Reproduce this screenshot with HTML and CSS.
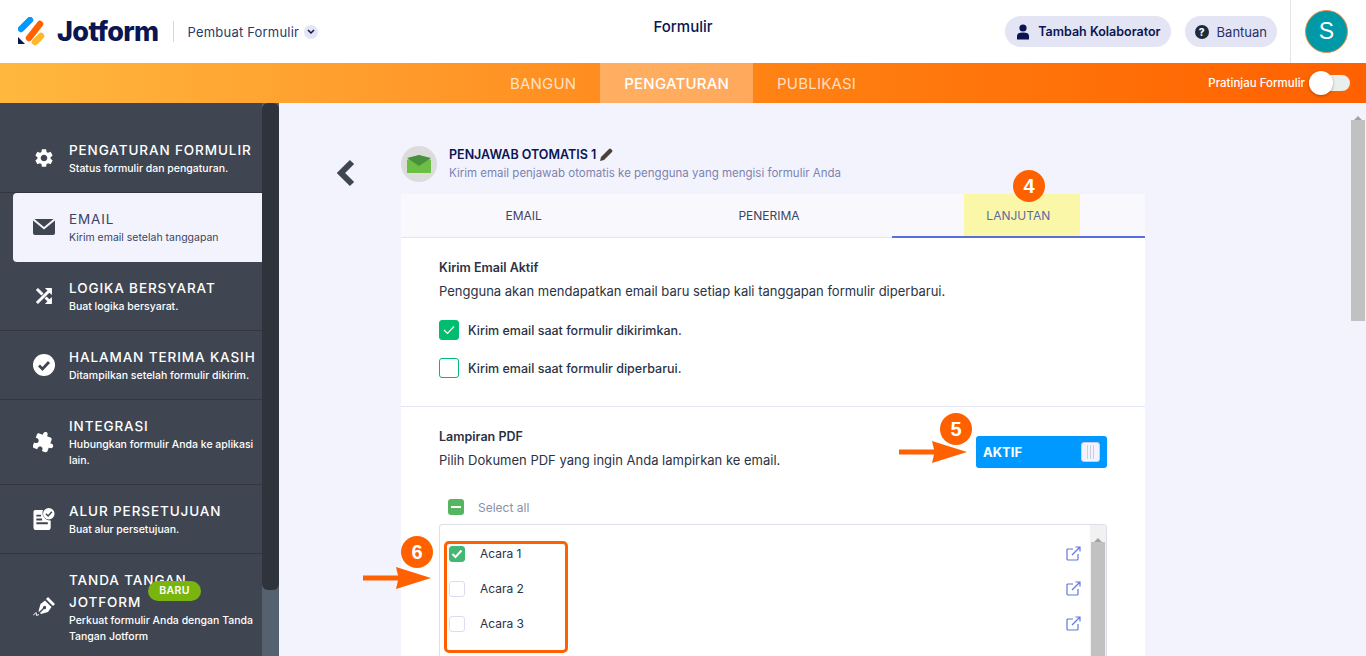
FILE: index.html
```html
<!DOCTYPE html>
<html lang="id">
  <head>
    <meta charset="UTF-8" />
    <title>Jotform - Pembuat Formulir</title>
    <link rel="stylesheet" href="styles.css">
  </head>
  <body>
    <header class="topbar">
      <div class="topbar__left">
        <svg class="logo" width="28" height="30" viewBox="0 0 28 30">
          <path d="M3 12 L12 3" stroke="#0099ff" stroke-width="6.4" stroke-linecap="round" />
          <path d="M11 21 L22 7" stroke="#ff6100" stroke-width="6.4" stroke-linecap="round" />
          <path d="M17 25 L23 19" stroke="#ffb629" stroke-width="6.4" stroke-linecap="round" />
          <path d="M0 20 L7 27 L0 27 Z" fill="#0a1551" />
        </svg>
        <span class="logo__text">Jotform</span>
        <span class="topbar__sep"></span>
        <span class="topbar__builder">Pembuat Formulir</span>
        <span class="topbar__caret">
          <svg width="8" height="6" viewBox="0 0 8 6"><path d="M1 1 L4 4 L7 1" fill="none" stroke="#0a1551" stroke-width="1.5" /></svg>
        </span>
      </div>
      <div class="topbar__title">Formulir</div>
      <div class="topbar__right">
        <button class="pill pill--bold">
          <svg width="14" height="16" viewBox="0 0 14 16"><circle cx="7" cy="4" r="3.6" fill="#0a1551" /><path d="M1 15.5 V12 C1 9.5 3 8.5 7 8.5 S13 9.5 13 12 V15.5 Z" fill="#0a1551" /></svg>
          Tambah Kolaborator
        </button>
        <button class="pill">
          <span class="pill__help">?</span>
          Bantuan
        </button>
        <div class="topbar__account">
          <div class="avatar">S</div>
        </div>
      </div>
    </header>

    <nav class="navbar">
      <div class="navbar__tabs">
        <a class="navbar__tab">BANGUN</a>
        <a class="navbar__tab navbar__tab--active">PENGATURAN</a>
        <a class="navbar__tab">PUBLIKASI</a>
      </div>
      <div class="preview">
        <span>Pratinjau Formulir</span>
        <span class="preview__switch"><span class="preview__knob"></span></span>
      </div>
    </nav>

    <div class="layout">
      <aside class="sidebar">
        <ul class="menu">
          <li class="menu__item">
            <svg class="menu__icon" viewBox="0 0 24 24"><path d="M19.14 12.94c.04-.3.06-.61.06-.94 0-.32-.02-.64-.07-.94l2.03-1.58c.18-.14.23-.41.12-.61l-1.92-3.32c-.12-.22-.37-.29-.59-.22l-2.39.96c-.5-.38-1.03-.7-1.62-.94l-.36-2.54c-.04-.24-.24-.41-.48-.41h-3.84c-.24 0-.43.17-.47.41l-.36 2.54c-.59.24-1.13.57-1.62.94l-2.39-.96c-.22-.08-.47 0-.59.22L2.74 8.87c-.12.21-.08.47.12.61l2.03 1.58c-.05.3-.09.63-.09.94s.02.64.07.94l-2.03 1.58c-.18.14-.23.41-.12.61l1.92 3.32c.12.22.37.29.59.22l2.39-.96c.5.38 1.03.7 1.62.94l.36 2.54c.05.24.24.41.48.41h3.84c.24 0 .44-.17.47-.41l.36-2.54c.59-.24 1.13-.56 1.62-.94l2.39.96c.22.08.47 0 .59-.22l1.92-3.32c.12-.22.07-.47-.12-.61l-2.01-1.58zM12 15.6c-1.98 0-3.6-1.62-3.6-3.6s1.62-3.6 3.6-3.6 3.6 1.62 3.6 3.6-1.62 3.6-3.6 3.6z" /></svg>
            <div class="menu__text">
              <div class="menu__title">PENGATURAN FORMULIR</div>
              <div class="menu__sub">Status formulir dan pengaturan.</div>
            </div>
          </li>
          <li class="menu__item menu__item--active">
            <svg class="menu__icon" viewBox="0 0 22 16"><path d="M1.5 0 H20.5 L11 8 Z M0 1.5 L11 10.5 L22 1.5 V14 Q22 16 20 16 H2 Q0 16 0 14 Z" /></svg>
            <div class="menu__text">
              <div class="menu__title">EMAIL</div>
              <div class="menu__sub">Kirim email setelah tanggapan</div>
            </div>
          </li>
          <li class="menu__item">
            <svg class="menu__icon" viewBox="0 0 24 24"><path stroke="#fff" stroke-width="1.2" d="M10.59 9.17L5.41 4 4 5.41l5.17 5.17 1.42-1.41zM14.5 4l2.04 2.04L4 18.59 5.41 20 17.96 7.46 20 9.5V4h-5.5zm.33 9.41l-1.41 1.41 3.13 3.13L14.5 20H20v-5.5l-2.04 2.04-3.13-3.13z" /></svg>
            <div class="menu__text">
              <div class="menu__title">LOGIKA BERSYARAT</div>
              <div class="menu__sub">Buat logika bersyarat.</div>
            </div>
          </li>
          <li class="menu__item">
            <svg class="menu__icon" viewBox="0 0 22 22"><circle cx="11" cy="11" r="11" /><path d="M6 11.5 L9.5 15 L16 8" fill="none" stroke="#3f4652" stroke-width="2.8" /></svg>
            <div class="menu__text">
              <div class="menu__title menu__title--nowrap">HALAMAN TERIMA KASIH</div>
              <div class="menu__sub">Ditampilkan setelah formulir dikirim.</div>
            </div>
          </li>
          <li class="menu__item">
            <svg class="menu__icon" viewBox="0 0 24 24"><g transform="rotate(20 12 12)"><path d="M20.5 11H19V7c0-1.1-.9-2-2-2h-4V3.5C13 2.12 11.88 1 10.5 1S8 2.12 8 3.5V5H4c-1.1 0-1.99.9-1.99 2v3.8H3.5c1.49 0 2.7 1.21 2.7 2.7s-1.21 2.7-2.7 2.7H2V20c0 1.1.9 2 2 2h3.8v-1.5c0-1.49 1.21-2.7 2.7-2.7 1.49 0 2.7 1.21 2.7 2.7V22H17c1.1 0 2-.9 2-2v-4h1.5c1.38 0 2.5-1.12 2.5-2.5S21.88 11 20.5 11z" /></g></svg>
            <div class="menu__text">
              <div class="menu__title">INTEGRASI</div>
              <div class="menu__sub">Hubungkan formulir Anda ke aplikasi lain.</div>
            </div>
          </li>
          <li class="menu__item">
            <svg class="menu__icon" viewBox="0 0 22 23"><path d="M2 2 H10 A8 8 0 0 0 18 13 V20 Q18 23 15 23 H3 Q0 23 0 20 V4 Q0 2 2 2 Z" /><path d="M3 8 H8 M3 12 H9 M3 16 H15" stroke="#3f4652" stroke-width="2" /><circle cx="16" cy="6" r="6" /><path d="M13 6 L15.3 8.3 L19.2 4" fill="none" stroke="#3f4652" stroke-width="1.6" /></svg>
            <div class="menu__text">
              <div class="menu__title">ALUR PERSETUJUAN</div>
              <div class="menu__sub">Buat alur persetujuan.</div>
            </div>
          </li>
          <li class="menu__item">
            <svg class="menu__icon" viewBox="0 0 22 20"><path d="M15 0 L22 7 L20 9 L13 2 Z M12 3.5 L18.5 10 L15 15 L8 17 L7 16 L11 12 A1.6 1.6 0 1 0 10 11 L6 15 L5.500 14 L7.500 7 Z" /><path d="M0 18.500 L3 15.500 L3.500 18.500 L6 17.500" fill="none" stroke="#fff" stroke-width="1" /></svg>
            <div class="menu__text">
              <div class="menu__title">TANDA TANGAN JOTFORM</div>
              <div class="menu__sub">Perkuat formulir Anda dengan Tanda Tangan Jotform</div>
            </div>
            <span class="menu__badge">BARU</span>
          </li>
        </ul>
        <div class="sidebar__scroll"><div class="sidebar__thumb"></div></div>
      </aside>

      <main class="main">
        <div class="main__back">
          <svg width="20" height="28" viewBox="0 0 20 28"><path d="M16 3 L5 14 L16 25" fill="none" stroke="#3f4652" stroke-width="6" /></svg>
        </div>
        <div class="main__col">
          <div class="intro">
            <div class="intro__icon">
              <svg width="24" height="18" viewBox="0 0 24 18">
                <path d="M0 5 L12 0 L24 5 V18 H0 Z" fill="#6cbe45" />
                <path d="M0 3 L12 0 L24 3 L12 11 Z" fill="#4a8f3c" />
              </svg>
            </div>
            <div>
              <div class="intro__title">
                PENJAWAB OTOMATIS 1
                <svg width="13" height="13" viewBox="0 0 13 13"><path d="M0 13 L1 9 L9 1 Q10 0 11 1 L12 2 Q13 3 12 4 L4 12 Z" fill="#4a4238" /></svg>
              </div>
              <div class="intro__sub">Kirim email penjawab otomatis ke pengguna yang mengisi formulir Anda</div>
            </div>
          </div>

          <div class="card">
            <div class="tabs">
              <div class="tabs__item">EMAIL</div>
              <div class="tabs__item">PENERIMA</div>
              <div class="tabs__item tabs__item--active"><span class="tabs__mark">LANJUTAN</span></div>
            </div>

            <section class="section section--email">
              <h3 class="section__title">Kirim Email Aktif</h3>
              <p class="section__desc">Pengguna akan mendapatkan email baru setiap kali tanggapan formulir diperbarui.</p>
              <label class="check">
                <span class="check__box check__box--on">
                  <svg width="12" height="10" viewBox="0 0 12 10"><path d="M1 5 L4.500 8.500 L11 1.500" fill="none" stroke="#fff" stroke-width="1.2" /></svg>
                </span>
                Kirim email saat formulir dikirimkan.
              </label>
              <label class="check">
                <span class="check__box"></span>
                Kirim email saat formulir diperbarui.
              </label>
            </section>

            <section class="section section--pdf">
              <div class="pdf__head">
                <div>
                  <h3 class="section__title">Lampiran PDF</h3>
                  <p class="section__desc">Pilih Dokumen PDF yang ingin Anda lampirkan ke email.</p>
                </div>
                <div class="switch">
                  AKTIF
                  <span class="switch__knob"><i></i><i></i><i></i></span>
                </div>
              </div>

              <div class="select-all">
                <span class="select-all__box"></span>
                Select all
              </div>
              <div class="docs">
                <div class="docs__list">
                  <div class="docs__row">
                    <span class="docs__box docs__box--on">
                      <svg width="12" height="10" viewBox="0 0 12 10"><path d="M1.500 5 L4.500 8 L10.500 1.500" fill="none" stroke="#fff" stroke-width="2" /></svg>
                    </span>
                    <span class="docs__name">Acara 1</span>
                    <svg class="docs__link" width="15" height="15" viewBox="0 0 15 15"><path d="M7 3 H2 Q1 3 1 4 V13 Q1 14 2 14 H11 Q12 14 12 13 V8 M6 9 L14 1 M9.500 1 H14 V5.500" fill="none" stroke="#6176e0" stroke-width="1.2" /></svg>
                  </div>
                  <div class="docs__row">
                    <span class="docs__box"></span>
                    <span class="docs__name">Acara 2</span>
                    <svg class="docs__link" width="15" height="15" viewBox="0 0 15 15"><path d="M7 3 H2 Q1 3 1 4 V13 Q1 14 2 14 H11 Q12 14 12 13 V8 M6 9 L14 1 M9.500 1 H14 V5.500" fill="none" stroke="#6176e0" stroke-width="1.2" /></svg>
                  </div>
                  <div class="docs__row">
                    <span class="docs__box"></span>
                    <span class="docs__name">Acara 3</span>
                    <svg class="docs__link" width="15" height="15" viewBox="0 0 15 15"><path d="M7 3 H2 Q1 3 1 4 V13 Q1 14 2 14 H11 Q12 14 12 13 V8 M6 9 L14 1 M9.500 1 H14 V5.500" fill="none" stroke="#6176e0" stroke-width="1.2" /></svg>
                  </div>
                </div>
                <div class="docs__scroll">
                  <span class="scroll-up"></span>
                  <div class="docs__thumb"></div>
                </div>
              </div>
            </section>
          </div>
        </div>
      </main>

      <div class="page-scroll">
        <span class="scroll-up"></span>
        <div class="page-scroll__thumb"></div>
      </div>
    </div>

    <!-- tutorial annotations -->
    <div class="step step--4">4</div>
    <div class="step step--5">5</div>
    <div class="step step--6">6</div>
    <svg class="arrow arrow--5" width="68" height="24" viewBox="0 0 68 24"><path d="M0 9.500 H35 L33 1 L68 12 L33 23 L35 14.500 H0 Z" fill="#ff6100" /></svg>
    <svg class="arrow arrow--6" width="68" height="24" viewBox="0 0 68 24"><path d="M0 9.500 H35 L33 1 L68 12 L33 23 L35 14.500 H0 Z" fill="#ff6100" /></svg>
    <div class="frame"></div>
  </body>
</html>
```

FILE: styles.css
```css
:root {
  --color-navy: #0a1551;
  --color-page: #f3f3fe;
  --color-side: #3f4652;
  --color-line: #e3e5f5;
  --color-orange: #ff6100;
  --color-text: #2b3245;
}

*,
*::before,
*::after {
  box-sizing: border-box;
}

html,
body {
  height: 100%;
  margin: 0;
  overflow: hidden;
}

body {
  position: relative;
  display: flex;
  flex-direction: column;
  font-family: Inter, "Noto Sans", sans-serif;
  font-size: 14px;
  color: var(--color-text);
  background-color: var(--color-page);
}

/* top bar */
.topbar {
  flex: 0 0 63px;
  display: grid;
  grid-template-columns: 1fr auto 1fr;
  align-items: center;
  background-color: #fff;
}

.topbar__left {
  display: flex;
  align-items: center;
  padding-left: 18px;
}

.logo {
  flex-shrink: 0;
}

.logo__text {
  margin-left: 11px;
  font-size: 27px;
  font-weight: 800;
  letter-spacing: -0.6px;
  color: var(--color-navy);
}

.topbar__sep {
  width: 1px;
  height: 21px;
  margin: 0 14px;
  background-color: #d3d6e6;
}

.topbar__builder {
  font-size: 13px;
  letter-spacing: 0.2px;
  color: #283a6b;
}

.topbar__caret {
  display: flex;
  align-items: center;
  justify-content: center;
  width: 14px;
  height: 14px;
  margin-left: 5px;
  border-radius: 50%;
  background-color: #e3e5f5;
}

.topbar__title {
  padding-bottom: 11px;
  font-size: 15px;
  font-weight: 500;
  color: var(--color-navy);
}

.topbar__right {
  display: flex;
  align-items: center;
  justify-content: flex-end;
  height: 100%;
  gap: 14px;
}

.pill {
  display: flex;
  align-items: center;
  gap: 8px;
  height: 31px;
  padding: 0 10px;
  border: 0;
  border-radius: 16px;
  font-family: inherit;
  font-size: 13px;
  color: #2a2f6b;
  background-color: #e3e5f5;
}

.pill--bold {
  padding: 0 10px 0 11px;
  font-weight: 600;
  font-size: 12.500px;
  color: var(--color-navy);
}

.pill__help {
  display: flex;
  align-items: center;
  justify-content: center;
  width: 14px;
  height: 14px;
  border-radius: 50%;
  font-size: 10px;
  font-weight: 800;
  color: #fff;
  background-color: #1c2b3a;
}

.topbar__account {
  display: flex;
  align-items: center;
  height: 100%;
  margin-left: -1px;
  padding: 0 18px 0 14px;
  border-left: 1px solid #e3e5ea;
}

.avatar {
  display: flex;
  align-items: center;
  justify-content: center;
  width: 43px;
  height: 43px;
  border: 1px solid #f08a3c;
  border-radius: 50%;
  font-family: "Liberation Sans", sans-serif;
  font-size: 23px;
  color: #fff;
  background-color: #0099a8;
}

/* orange nav */
.navbar {
  flex: 0 0 40px;
  display: grid;
  grid-template-columns: 1fr auto 1fr;
  background: linear-gradient(90deg, #ffb83d 0%, #ff9a2a 30%, #ff7d10 62%, #ff6100 100%);
}

.navbar__tabs {
  grid-column: 2;
  display: flex;
}

.navbar__tab {
  display: flex;
  align-items: center;
  padding: 0 24px;
  font-size: 15px;
  letter-spacing: 0.2px;
  color: rgba(255, 255, 255, 0.75);
}

.navbar__tab--active {
  font-weight: 500;
  color: #fff;
  background-color: rgba(255, 255, 255, 0.3);
}

.preview {
  display: flex;
  align-items: center;
  justify-content: flex-end;
  gap: 4px;
  padding-right: 16px;
  font-size: 11.500px;
  font-weight: 500;
  color: #fff;
}

.preview__switch {
  display: block;
  width: 41px;
  height: 16px;
  border-radius: 8px;
  background-color: #e8efec;
}

.preview__knob {
  display: block;
  width: 24px;
  height: 24px;
  margin-top: -4px;
  border-radius: 50%;
  background-color: #fff;
  box-shadow: 0 1px 3px rgba(0, 0, 0, 0.3);
}

/* body layout */
.layout {
  flex: 1 1 auto;
  display: flex;
  min-height: 0;
}

.sidebar {
  flex: 0 0 279px;
  display: flex;
  overflow: hidden;
  background-color: var(--color-side);
}

.menu {
  flex: 0 0 262px;
  margin: 0;
  padding: 21px 0 0;
  list-style: none;
}

.menu__item {
  position: relative;
  display: flex;
  align-items: center;
  padding: 15px 0 15px 33px;
  border-bottom: 1px solid #31363f;
  color: #fff;
  fill: #fff;
}

.menu__item--active {
  margin-left: 13px;
  padding-left: 20px;
  border-bottom-color: transparent;
  border-radius: 4px 0 0 4px;
  color: #3c4463;
  fill: #3f4652;
  background-color: var(--color-page);
}

.menu__icon {
  flex: 0 0 22px;
  width: 22px;
  height: 22px;
  margin-right: 14px;
}

.menu__text {
  min-width: 0;
}

.menu__title {
  font-size: 13.500px;
  line-height: 22px;
  font-weight: 500;
  letter-spacing: 0.9px;
}

.menu__title--nowrap {
  white-space: nowrap;
}

.menu__item--active .menu__title {
  font-weight: 400;
}

.menu__sub {
  font-size: 10.500px;
  line-height: 16px;
  font-weight: 500;
}

.menu__item--active .menu__sub {
  font-weight: 400;
}

.menu__badge {
  position: absolute;
  top: 27px;
  left: 148px;
  width: 53px;
  height: 20px;
  border-radius: 10px;
  font-size: 10.500px;
  font-weight: 600;
  line-height: 20px;
  letter-spacing: 0.4px;
  text-align: center;
  color: #fff;
  background-color: #7ab50f;
}

.sidebar__scroll {
  flex: 0 0 17px;
  background-color: #566170;
}

.sidebar__thumb {
  height: 487px;
  border-radius: 6px;
  background-color: #2f333c;
}

/* main column */
.main {
  flex: 1 1 auto;
  display: flex;
  min-width: 0;
  overflow: hidden;
}

.main__back {
  flex: 0 0 122px;
  padding: 56px 0 0 57px;
}

.main__col {
  flex: 0 0 744px;
}

.intro {
  display: flex;
  align-items: center;
  gap: 12px;
  height: 91px;
  padding-top: 30px;
}

.intro__icon {
  display: flex;
  align-items: center;
  justify-content: center;
  width: 36px;
  height: 36px;
  border-radius: 50%;
  background-color: #dcdcdc;
}

.intro__title {
  display: flex;
  align-items: center;
  gap: 4px;
  font-size: 12.500px;
  line-height: 18px;
  font-weight: 600;
  color: var(--color-navy);
}

.intro__sub {
  font-size: 11.500px;
  line-height: 18px;
  color: #7c83b0;
}

.card {
  background-color: #fff;
}

.tabs {
  display: flex;
  height: 44px;
  border-bottom: 1px solid var(--color-line);
  background-color: #f9f9fd;
}

.tabs__item {
  flex: 1 1 0;
  display: flex;
  align-items: center;
  justify-content: center;
  font-size: 12px;
  color: #3c4463;
}

.tabs__item--active {
  height: 44px;
  align-items: stretch;
  padding-left: 8px;
  border-bottom: 2px solid #5a6fdc;
  color: #5d6aa5;
}

.tabs__mark {
  display: flex;
  align-items: center;
  padding: 0 30px 0 22px;
  background-color: #fbf7a8;
}

.section {
  padding: 0 38px;
}

.section--email {
  height: 169px;
  padding-top: 21px;
  border-bottom: 1px solid var(--color-line);
}

.section--pdf {
  padding-top: 21px;
}

.section__title {
  margin: 0;
  font-size: 12.500px;
  line-height: 18px;
  font-weight: 600;
}

.section__desc {
  margin: 5px 0 0;
  font-size: 13px;
  line-height: 18px;
}

.check {
  display: flex;
  align-items: center;
  gap: 9px;
  height: 20px;
  margin-top: 18px;
  font-size: 12.500px;
  font-weight: 500;
}

.section__desc + .check {
  margin-top: 20px;
}

.check__box {
  display: flex;
  align-items: center;
  justify-content: center;
  width: 20px;
  height: 20px;
  border: 1px solid #01bd6f;
  border-radius: 3px;
}

.check__box--on {
  background-color: #01bd6f;
}

.pdf__head {
  display: flex;
  align-items: flex-start;
  justify-content: space-between;
}

.switch {
  display: flex;
  align-items: center;
  justify-content: space-between;
  width: 131px;
  height: 32px;
  margin-top: 8px;
  padding: 0 7px;
  border-radius: 3px;
  font-size: 13px;
  font-weight: 700;
  color: #fff;
  background-color: #0099ff;
}

.switch__knob {
  display: flex;
  align-items: center;
  justify-content: center;
  gap: 2px;
  width: 19px;
  height: 20px;
  border: 1px solid #c8ceed;
  border-radius: 3px;
  background-color: #f3f3fe;
}

.switch__knob i {
  width: 1px;
  height: 14px;
  background-color: #c8ceed;
}

.select-all {
  display: flex;
  align-items: center;
  gap: 14px;
  height: 16px;
  margin: 30px 0 0 9px;
  font-size: 12px;
  color: #8d8fa8;
}

.select-all__box {
  display: flex;
  align-items: center;
  justify-content: center;
  width: 16px;
  height: 16px;
  border-radius: 3px;
  background-color: #55b560;
}

.select-all__box::before {
  content: "";
  width: 10px;
  height: 2px;
  background-color: #fff;
}

.docs {
  display: flex;
  height: 140px;
  margin-top: 9px;
  border: 1px solid #dcdee9;
  border-radius: 3px 3px 0 0;
}

.docs__list {
  flex: 1 1 auto;
  padding: 11px 0 0 9px;
}

.docs__row {
  display: flex;
  align-items: center;
  height: 35px;
  font-size: 12px;
}

.docs__box {
  display: flex;
  align-items: center;
  justify-content: center;
  width: 16px;
  height: 16px;
  border: 1px solid #dadcf0;
  border-radius: 3px;
}

.docs__box--on {
  border-color: #42b873;
  background-color: #42b873;
}

.docs__name {
  margin-left: 15px;
}

.docs__link {
  margin-left: auto;
  margin-right: 9px;
}

.docs__scroll {
  flex: 0 0 16px;
  padding: 0 1px;
  background-color: #f1f1f1;
}

.docs__thumb {
  height: 120px;
  background-color: #c1c1c1;
}

.scroll-up {
  display: block;
  width: 0;
  height: 17px;
  margin: 0 auto;
  border: 4px solid transparent;
  border-top: 6px solid transparent;
  border-bottom: 4px solid #a3a3a3;
  border-bottom-width: 4px;
}

.page-scroll {
  flex: 0 0 16px;
  padding: 0 1px;
  background-color: #f3f3fe;
}

.page-scroll__thumb {
  height: 201px;
  background-color: #c1c1c1;
}

/* annotations */
.step {
  position: absolute;
  width: 32px;
  height: 32px;
  border-radius: 50%;
  font-family: "Liberation Sans", sans-serif;
  font-size: 20px;
  font-weight: 700;
  line-height: 32px;
  text-align: center;
  color: #fff;
  background-color: var(--color-orange);
}

.step--4 {
  top: 170px;
  left: 1013px;
}

.step--5 {
  top: 413px;
  left: 940px;
}

.step--6 {
  top: 536px;
  left: 401px;
}

.arrow {
  position: absolute;
}

.arrow--5 {
  top: 440px;
  left: 899px;
}

.arrow--6 {
  top: 566px;
  left: 363px;
}

.frame {
  position: absolute;
  top: 541px;
  left: 444px;
  width: 124px;
  height: 112px;
  border: 3px solid var(--color-orange);
  border-radius: 5px;
}
```
